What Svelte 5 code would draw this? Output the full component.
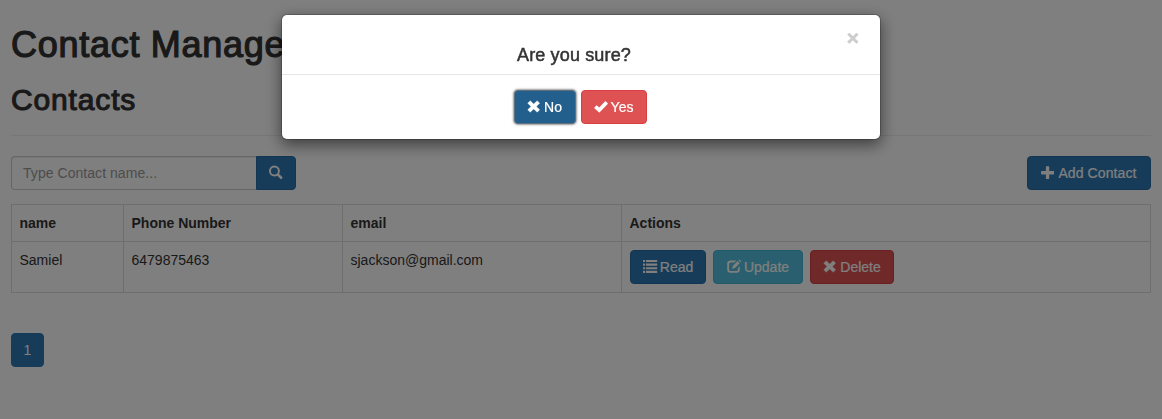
<script>
  const contacts = [{ name: 'Samiel', phone: '6479875463', email: 'sjackson@gmail.com' }];
  const columns = [
    { label: 'name', width: 112 },
    { label: 'Phone Number', width: 219 },
    { label: 'email', width: 279 },
    { label: 'Actions', width: 529 }
  ];
</script>

{#snippet icon(name)}
  <svg class="icon" viewBox="0 0 14 14" aria-hidden="true">
    {#if name === 'remove'}
      <path d="M3.2.7 6.7 4 10.2.7 12.7 3.2 9.4 6.5 12.7 9.8 10.2 12.3 6.7 9 3.2 12.3.7 9.8 4 6.5.7 3.2Z" stroke="currentColor" stroke-width=".3" stroke-linejoin="round" />
    {:else if name === 'ok'}
      <path d="M.4 7.6 2.4 5.5Q2.7 5.2 3 5.5L5.2 7.4 11.1 1.3Q11.4 1 11.7 1.3L13.7 3.3Q14 3.6 13.7 3.9L5.7 12.2Q5.3 12.6 4.9 12.2L.4 8.2Q.1 7.9.4 7.6Z" />
    {:else if name === 'search'}
      <path fill-rule="evenodd" d="M5.4-.5a5.5 5.5 0 1 0 2.9 10.2l3.2 3.3q.5.4.9 0l1-1q.4-.4 0-.9L10.1 7.9A5.5 5.5 0 0 0 5.4-.5Zm0 2a3.5 3.5 0 1 1 0 7 3.5 3.5 0 0 1 0-7Z" />
    {:else if name === 'plus'}
      <path d="M5.3.2h2.5q.4 0 .4.4v4.3h4.4q.4 0 .4.4V8q0 .4-.4.4H8.2v4.3q0 .4-.4.4H5.3q-.4 0-.4-.4V8.4H.5q-.4 0-.4-.4V5.3q0-.4.4-.4h4.4V.6q0-.4.4-.4Z" />
    {:else if name === 'list'}
      <path d="M0 0h2.1v2.1H0zM3 0h11.2v2.1H3zM0 3.6h2.1v2.1H0zM3 3.6h11.2v2.1H3zM0 7.2h2.1v2.1H0zM3 7.2h11.2v2.1H3zM0 10.8h2.1v2.1H0zM3 10.8h11.2v2.1H3z" />
    {:else}
      <path d="M9.3.6H3.5A3.3 3.3 0 0 0 .2 3.9v5.6a3.3 3.3 0 0 0 3.3 3.3h6a3.3 3.3 0 0 0 3.3-3.3V6.3l-1.9 1.9v1.2q0 1.5-1.5 1.5H3.6q-1.5 0-1.5-1.5V4q0-1.5 1.5-1.5h3.8Z" />
      <path d="m5 8.8.9-3L10.6 1.1l2.1 2.1L8 7.9ZM11.5.2l.5-.5q.3-.3.6 0l1.5 1.5q.3.3 0 .6l-.5.5Z" />
    {/if}
  </svg>
{/snippet}

<main>
  <h1>Contact Manager</h1>
  <h2>Contacts</h2>
  <hr />
  <div class="toolbar">
    <div class="search">
      <input aria-label="Contact name" placeholder="Type Contact name..." />
      <button class="btn primary find" aria-label="Search">{@render icon('search')}</button>
    </div>
    <button class="btn primary add">{@render icon('plus')}Add Contact</button>
  </div>
  <table>
    <colgroup>
      {#each columns as column}<col style="width: {column.width}px" />{/each}
    </colgroup>
    <thead>
      <tr>{#each columns as column}<th>{column.label}</th>{/each}</tr>
    </thead>
    <tbody>
      {#each contacts as contact}
        <tr>
          <td>{contact.name}</td>
          <td>{contact.phone}</td>
          <td>{contact.email}</td>
          <td>
            <div class="actions">
              <button class="btn primary read">{@render icon('list')}Read</button>
              <button class="btn info update">{@render icon('edit')}Update</button>
              <button class="btn danger delete">{@render icon('remove')}Delete</button>
            </div>
          </td>
        </tr>
      {/each}
    </tbody>
  </table>
  <nav><button class="btn page">1</button></nav>
</main>

<div class="backdrop"></div>
<div class="overlay">
  <div class="modal" role="dialog" aria-modal="true" aria-labelledby="title">
    <header>
      <button class="close" aria-label="Close">×</button>
      <h4 id="title">Are you sure?</h4>
    </header>
    <div class="choices">
      <button class="btn primary focused no">{@render icon('remove')}No</button>
      <button class="btn danger yes">{@render icon('ok')}Yes</button>
    </div>
  </div>
</div>

<style>
  :global(body) { background: #fff; overflow: hidden; }
  :global(*) { box-sizing: border-box; }
  main, .overlay {
    font: 14px/20px "Helvetica Neue", Helvetica, "Liberation Sans", Arial, sans-serif;
    color: #333;
  }
  main { height: 419px; padding: 25px 11px 0; }
  h1, h2, h4 { margin: 0; font-weight: 400; white-space: nowrap; }
  h1 { font-size: 36px; line-height: 40px; letter-spacing: .72px; -webkit-text-stroke: 1.2px; }
  h2 { margin-top: 18px; font-size: 30px; line-height: 33px; letter-spacing: .85px; -webkit-text-stroke: 1.1px; }
  hr { margin: 19px 0 20px; border: 0; border-top: 1px solid #eee; }
  .toolbar { display: flex; justify-content: space-between; height: 34px; margin-bottom: 14px; }
  .search { display: flex; width: 285px; }
  input {
    width: 245px; height: 34px; padding: 6px 11px; border: 1px solid #ccc; border-right: 0;
    border-radius: 4px 0 0 4px; background: #fff; box-shadow: inset 0 1px 1px rgba(0,0,0,.075);
    font: inherit; letter-spacing: .05px; color: #555;
  }
  input::placeholder { color: #999; opacity: 1; }
  .btn {
    display: inline-flex; align-items: center; justify-content: center; gap: 3px;
    height: 34px; padding: 0 0 1px; border: 1px solid; border-radius: 4px;
    font: inherit; color: #fff; white-space: nowrap; -webkit-text-stroke: .2px;
  }
  .icon { width: 14px; height: 14px; flex: none; fill: currentColor; overflow: visible; }
  .primary { background: #2d79b4; border-color: #286da4; }
  .info { background: #53bfdc; border-color: #42b7d7; }
  .danger { background: #de5253; border-color: #d93f42; }
  .find { width: 40px; border-radius: 0 4px 4px 0; }
  .add { width: 124px; letter-spacing: .1px; }
  table { width: 1139px; table-layout: fixed; border-collapse: collapse; border: 1px solid #ddd; }
  th, td { height: 37px; padding: 8px 7px 8px 7.5px; border: 1px solid #ddd; text-align: left; vertical-align: top; }
  td { height: 51px; }
  .actions { display: flex; gap: 7px; padding-left: .5px; }
  .read { width: 76px; }
  .update { width: 90px; }
  .delete { width: 84px; }
  nav { margin-top: 40px; display: flex; }
  .page { width: 33px; background: #2d79b4; border-color: #2d79b4; -webkit-text-stroke: 0; }
  .backdrop { position: fixed; inset: 0; background: rgba(0,0,0,.5); }
  .overlay { position: fixed; inset: 0; padding-top: 14px; }
  .modal {
    width: 600px; height: 126px; margin-left: 281px; background: #fff; background-clip: padding-box;
    border: 1px solid rgba(0,0,0,.2); border-radius: 6px; box-shadow: 0 5px 15px rgba(0,0,0,.5);
  }
  header { display: flex; flex-direction: column; height: 60px; padding: 15px; border-bottom: 1px solid #e5e5e5; }
  .close {
    align-self: flex-end; width: 24px; height: 16px; padding: 0; border: 0; background: none;
    font: bold 21px/15px "Liberation Sans", Arial, sans-serif; color: #ccc; -webkit-text-stroke: .5px;
  }
  h4 { padding-right: 14px; text-align: center; font-size: 18px; line-height: 20px; letter-spacing: .15px; -webkit-text-stroke: .5px; }
  .choices { display: flex; justify-content: center; gap: 5px; padding: 15px 2px 0 0; }
  .focused { background: #235f8d; border-color: #5d7180; box-shadow: 0 0 2px 1px #999; }
  .no { width: 62px; }
  .yes { width: 66px; }
</style>
